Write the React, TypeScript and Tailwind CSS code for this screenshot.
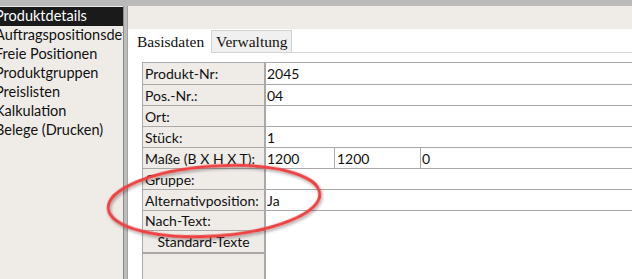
import React from 'react';

const NAV = [
  'Produktdetails',
  'Auftragspositionsdetails',
  'Freie Positionen',
  'Produktgruppen',
  'Preislisten',
  'Kalkulation',
  'Belege (Drucken)',
];

const ROWS: { label: string; values: string[] }[] = [
  { label: 'Produkt-Nr:', values: ['2045'] },
  { label: 'Pos.-Nr.:', values: ['04'] },
  { label: 'Ort:', values: [''] },
  { label: 'Stück:', values: ['1'] },
  { label: 'Maße (B X H X T):', values: ['1200', '1200', '0'] },
  { label: 'Gruppe:', values: [''] },
  { label: 'Alternativposition:', values: ['Ja'] },
];

const sans = { fontFamily: 'Lato, "Open Sans", sans-serif' };

function FieldRow({ label, values, first }: { label: string; values: string[]; first?: boolean }) {
  return (
    <div className={`flex border-b border-[#a9a9a9] ${first ? 'h-[22px]' : 'h-[21px]'}`}>
      <div className="w-[124px] shrink-0 bg-[#efece8] border-l border-r-2 border-[#a9a9a9] pl-[2px] flex items-center text-[14px] text-[#111]">
        {label}
      </div>
      <div className="flex flex-1 min-w-0">
        {values.map((v, i) => (
          <div
            key={i}
            className={`flex items-center pl-[1px] text-[14px] text-[#111] ${
              values.length > 1 && i === 0 ? 'w-[69px] border-r border-[#a9a9a9]' : ''
            } ${values.length > 1 && i === 1 ? 'w-[86px] border-r border-[#a9a9a9] pl-[2px]' : ''} ${
              values.length === 1 || i === 2 ? 'flex-1' : ''
            }`}
          >
            {v}
          </div>
        ))}
      </div>
    </div>
  );
}

export default function App() {
  return (
    <div className="relative w-[632px] h-[279px] overflow-hidden bg-white flex flex-col" style={sans}>
      <div className="h-[6px] shrink-0 bg-[#bababa]" />
      <div className="flex flex-1 min-h-0">
        <nav className="w-[123px] shrink-0 bg-[#efece8] overflow-hidden pt-[1px]">
          {NAV.map((item, i) => (
            <div
              key={item}
              className={`h-[19px] flex items-center whitespace-nowrap text-[14.5px] leading-none ${
                i === 0 ? 'bg-[#1a1a1a] text-white' : 'text-[#111]'
              }`}
            >
              <span className="ml-[-5px]">{item}</span>
            </div>
          ))}
        </nav>
        <div className="w-[5px] shrink-0 bg-[#bdbdbd] border-l border-[#8c8c8c] border-r border-r-[#a3a3a3]" />
        <main className="flex-1 min-w-0 flex flex-col">
          <div className="h-[23px] shrink-0 bg-[#efece8]" />
          <div className="flex h-[23px] mt-[1px] pl-[7px] shrink-0" style={{ fontFamily: '"Liberation Serif", serif' }}>
            <div className="w-[76px] bg-white flex items-center pl-[2px] text-[15.5px] text-[#111]">Basisdaten</div>
            <div className="w-[81px] bg-[#f0f0f0] border border-[#d2d2d2] flex items-center pl-[4px] text-[15.5px] text-[#111]">
              Verwaltung
            </div>
            <div className="flex-1 border-b border-[#d2d2d2]" />
          </div>
          <div className="flex-1 pt-[9px] pl-[14px]">
            <div className="border-t border-[#a9a9a9]">
              {ROWS.map((r, i) => (
                <FieldRow key={r.label} label={r.label} values={r.values} first={i === 0} />
              ))}
              <div className="w-[124px] bg-[#efece8] border-l border-r-2 border-[#a9a9a9] flex flex-col">
                <div className="h-[19px] pl-[2px] flex items-center text-[14px] text-[#111]">Nach-Text:</div>
                <div className="h-[24px] border-t border-b-2 border-[#a9a9a9] flex items-center justify-center text-[14px] text-[#111]">
                  Standard-Texte
                </div>
                <div className="h-[40px]" />
              </div>
            </div>
          </div>
        </main>
      </div>
      <svg className="absolute inset-0 pointer-events-none" width="632" height="279" viewBox="0 0 632 279">
        <defs>
          <filter id="sh" x="-10%" y="-30%" width="120%" height="160%">
            <feDropShadow dx="1" dy="2" stdDeviation="1.5" floodColor="#000" floodOpacity="0.35" />
          </filter>
        </defs>
        <ellipse
          cx="214"
          cy="201"
          rx="106"
          ry="35"
          transform="rotate(-4 214 201)"
          fill="none"
          stroke="#ec4343"
          strokeWidth="3"
          filter="url(#sh)"
        />
      </svg>
    </div>
  );
}
